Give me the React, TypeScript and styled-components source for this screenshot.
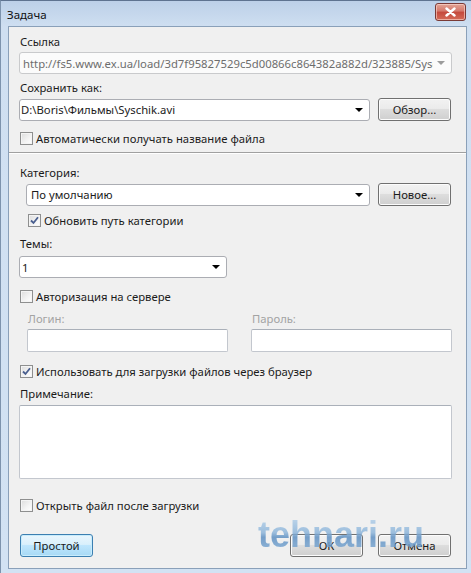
import React from "react";
import styled, { createGlobalStyle, css } from "styled-components";

const Global = createGlobalStyle`
  html, body { margin: 0; padding: 0; background: #ffffff; }
  body { font-family: "Noto Sans", "Open Sans", sans-serif; font-size: 11.3px; color: #1b1b1b; }
  * { box-sizing: border-box; }
`;

const Window = styled.div`
  position: relative;
  width: 471px;
  height: 573px;
  background: linear-gradient(#bcd0e8 0px, #cfdff1 26px, #d2e2f3 100%);
  border-top: 1px solid #5e7390;
  border-left: 1px solid #7d93ad;
  display: flex;
  flex-direction: column;
  overflow: hidden;
`;

const TitleBar = styled.div`
  height: 25px;
  flex: none;
  display: flex;
  align-items: center;
  justify-content: space-between;
  padding: 0 5px 0 6px;
`;

const Title = styled.span`
  font-size: 11.5px;
  color: #101010;
  margin-top: 1px;
`;

const CloseButton = styled.div`
  width: 31px;
  height: 18px;
  margin-top: -3px;
  border: 1px solid #7a3a36;
  border-radius: 3px;
  background: linear-gradient(#e3a596 0%, #d4776a 45%, #c4493c 50%, #d46b58 100%);
  box-shadow: inset 0 0 0 1px rgba(255, 220, 210, 0.6);
  display: flex;
  align-items: center;
  justify-content: center;
`;

const Client = styled.div`
  flex: 1;
  margin: 0 4px 4px 7px;
  background: #f0f0f0;
  border: 1px solid #8aa0b9;
  display: flex;
  flex-direction: column;
`;

const Section = styled.div<{ $top: number }>`
  margin-top: ${(p) => p.$top}px;
  padding: 0 14px 0 10px;
  display: flex;
  flex-direction: column;
`;

const Label = styled.div<{ $disabled?: boolean; $indent?: number }>`
  height: 15px;
  flex: none;
  line-height: 15px;
  white-space: nowrap;
  padding-left: ${(p) => p.$indent ?? 1}px;
  color: ${(p) => (p.$disabled ? "#a3a3a3" : "#1b1b1b")};
`;

const Row = styled.div<{ $indent?: number; $gap?: number; $right?: number }>`
  display: flex;
  align-items: center;
  gap: ${(p) => p.$gap ?? 8}px;
  padding-left: ${(p) => p.$indent ?? 0}px;
  padding-right: ${(p) => p.$right ?? 1}px;
`;

const fieldBase = css`
  height: 22px;
  background: #ffffff;
  border: 1px solid #abadb3;
  border-top-color: #9ea2aa;
  border-radius: 2px;
  display: flex;
  align-items: center;
`;

const Combo = styled.div<{ $width?: number; $disabled?: boolean }>`
  ${fieldBase}
  ${(p) => (p.$width ? `width: ${p.$width}px; flex: none;` : "flex: 1 1 0;")}
  min-width: 0;
  padding-left: ${(p) => (p.$disabled ? 3 : 1)}px;
  padding-right: 6px;
  background: ${(p) => (p.$disabled ? "#fbfbfb" : "#ffffff")};
  border-color: ${(p) => (p.$disabled ? "#c9cacc" : "#abadb3")};
  border-radius: 3px;
`;

const ComboText = styled.span<{ $disabled?: boolean; $pad?: number }>`
  flex: 1;
  overflow: hidden;
  white-space: nowrap;
  padding-left: ${(p) => p.$pad ?? 0}px;
  color: ${(p) => (p.$disabled ? "#6d6d6d" : "#1b1b1b")};
`;

const Arrow = styled.span<{ $disabled?: boolean }>`
  width: 0;
  height: 0;
  border-left: 4px solid transparent;
  border-right: 4px solid transparent;
  border-top: 4px solid ${(p) => (p.$disabled ? "#9c9c9c" : "#000000")};
  margin-left: 4px;
`;

const TextBox = styled.div<{ $height?: number }>`
  ${fieldBase}
  width: 100%;
  flex: none;
  height: ${(p) => p.$height ?? 23}px;
  border-color: #c3c7ce;
  border-top-color: #aab0b9;
`;

const Button = styled.div<{ $default?: boolean }>`
  width: 73px;
  height: 23px;
  flex: none;
  border: 1px solid ${(p) => (p.$default ? "#3c7fb1" : "#707070")};
  border-radius: 3px;
  background: ${(p) =>
    p.$default
      ? "linear-gradient(#eaf6fd 0%, #d9f0fc 45%, #bee6fd 50%, #a7d9f5 100%)"
      : "linear-gradient(#f2f2f2 0%, #ebebeb 45%, #dddddd 50%, #cfcfcf 100%)"};
  box-shadow: inset 0 0 0 1px ${(p) => (p.$default ? "#c8ecfc" : "#fcfcfc")};
  display: flex;
  align-items: center;
  justify-content: center;
  color: #1b1b1b;
`;

const CheckRow = styled.div<{ $indent?: number }>`
  height: 15px;
  display: flex;
  align-items: center;
  gap: 3px;
  padding-left: ${(p) => p.$indent ?? 1}px;
  white-space: nowrap;
`;

const Box = styled.div`
  width: 13px;
  height: 13px;
  flex: none;
  border: 1px solid #8e8f8f;
  background: linear-gradient(135deg, #dcdcdc 0%, #f4f4f4 60%, #ffffff 100%);
  box-shadow: inset 0 0 0 1px #f4f4f4;
  display: flex;
  align-items: center;
  justify-content: center;
`;

const Separator = styled.div<{ $top: number }>`
  margin-top: ${(p) => p.$top}px;
  height: 2px;
  flex: none;
  border-top: 1px solid #a0a0a0;
  border-bottom: 1px solid #ffffff;
`;

const Spacer = styled.div`
  flex: 1;
`;

const Half = styled.div`
  width: 201px;
  display: flex;
  flex-direction: column;
`;

const Pair = styled.div<{ $top: number }>`
  margin-top: ${(p) => p.$top}px;
  display: flex;
  justify-content: space-between;
  padding: 0 14px 0 18px;
`;

const FieldGap = styled.div`
  height: 3px;
  flex: none;
`;

const ButtonRow = styled.div`
  margin-top: 21px;
  padding: 0 15px 0 11px;
  display: flex;
  align-items: center;
  gap: 15px;
`;

const Watermark = styled.div`
  position: absolute;
  left: 257px;
  top: 512px;
  font-family: "Liberation Sans", "DejaVu Sans", sans-serif;
  font-weight: 700;
  font-size: 36px;
  letter-spacing: 0px;
  line-height: 44px;
  background: linear-gradient(#c2daef 0%, #8db5da 45%, #5f90c2 55%, #90b9de 100%);
  -webkit-background-clip: text;
  background-clip: text;
  color: transparent;
  opacity: 0.85;
  pointer-events: none;
`;

const Check = ({ checked }: { checked?: boolean }) => (
  <Box>
    {checked && (
      <svg width="9" height="9" viewBox="0 0 9 9">
        <path d="M1 4.5 L3.5 7 L8 1.2" fill="none" stroke="#4a5f8f" strokeWidth="1.8" />
      </svg>
    )}
  </Box>
);

export default function App() {
  return (
    <>
      <Global />
      <Window>
        <TitleBar>
          <Title>Задача</Title>
          <CloseButton>
            <svg width="11" height="10" viewBox="0 0 11 10">
              <path d="M1.5 1.5 L9.5 8.5 M9.5 1.5 L1.5 8.5" stroke="#ffffff" strokeWidth="2.4" strokeLinecap="round" />
            </svg>
          </CloseButton>
        </TitleBar>
        <Client>
          <Section $top={7}>
            <Label>Ссылка</Label>
          </Section>
          <Section $top={3}>
            <Row $right={0}>
              <Combo $disabled>
                <ComboText $disabled>
                  http://fs5.www.ex.ua/load/3d7f95827529c5d00866c864382a882d/323885/Syschik.avi
                </ComboText>
                <Arrow $disabled />
              </Combo>
            </Row>
          </Section>
          <Section $top={6}>
            <Label>Сохранить как:</Label>
          </Section>
          <Section $top={3}>
            <Row>
              <Combo>
                <ComboText>D:\Boris\Фильмы\Syschik.avi</ComboText>
                <Arrow />
              </Combo>
              <Button>Обзор...</Button>
            </Row>
          </Section>
          <Section $top={10}>
            <CheckRow>
              <Check />
              <span>Автоматически получать название файла</span>
            </CheckRow>
          </Section>
          <Separator $top={6} />
          <Section $top={11}>
            <Label>Категория:</Label>
          </Section>
          <Section $top={3}>
            <Row $indent={7}>
              <Combo>
                <ComboText $pad={3}>По умолчанию</ComboText>
                <Arrow />
              </Combo>
              <Button>Новое...</Button>
            </Row>
          </Section>
          <Section $top={7}>
            <CheckRow $indent={9}>
              <Check checked />
              <span>Обновить путь категории</span>
            </CheckRow>
          </Section>
          <Section $top={8}>
            <Label>Темы:</Label>
          </Section>
          <Section $top={5}>
            <Row>
              <Combo $width={208}>
                <ComboText $pad={1}>1</ComboText>
                <Arrow />
              </Combo>
            </Row>
          </Section>
          <Section $top={11}>
            <CheckRow>
              <Check />
              <span>Авторизация на сервере</span>
            </CheckRow>
          </Section>
          <Pair $top={7}>
            <Half>
              <Label $disabled>Логин:</Label>
              <FieldGap />
              <TextBox />
            </Half>
            <Half>
              <Label $disabled>Пароль:</Label>
              <FieldGap />
              <TextBox />
            </Half>
          </Pair>
          <Section $top={12}>
            <CheckRow>
              <Check checked />
              <span>Использовать для загрузки файлов через браузер</span>
            </CheckRow>
          </Section>
          <Section $top={7}>
            <Label>Примечание:</Label>
          </Section>
          <Section $top={4}>
            <Row $right={0}>
              <TextBox $height={74} />
            </Row>
          </Section>
          <Section $top={19}>
            <CheckRow>
              <Check />
              <span>Открыть файл после загрузки</span>
            </CheckRow>
          </Section>
          <ButtonRow>
            <Button $default>Простой</Button>
            <Spacer />
            <Button>ОК</Button>
            <Button>Отмена</Button>
          </ButtonRow>
        </Client>
        <Watermark>tehnari.ru</Watermark>
      </Window>
    </>
  );
}
